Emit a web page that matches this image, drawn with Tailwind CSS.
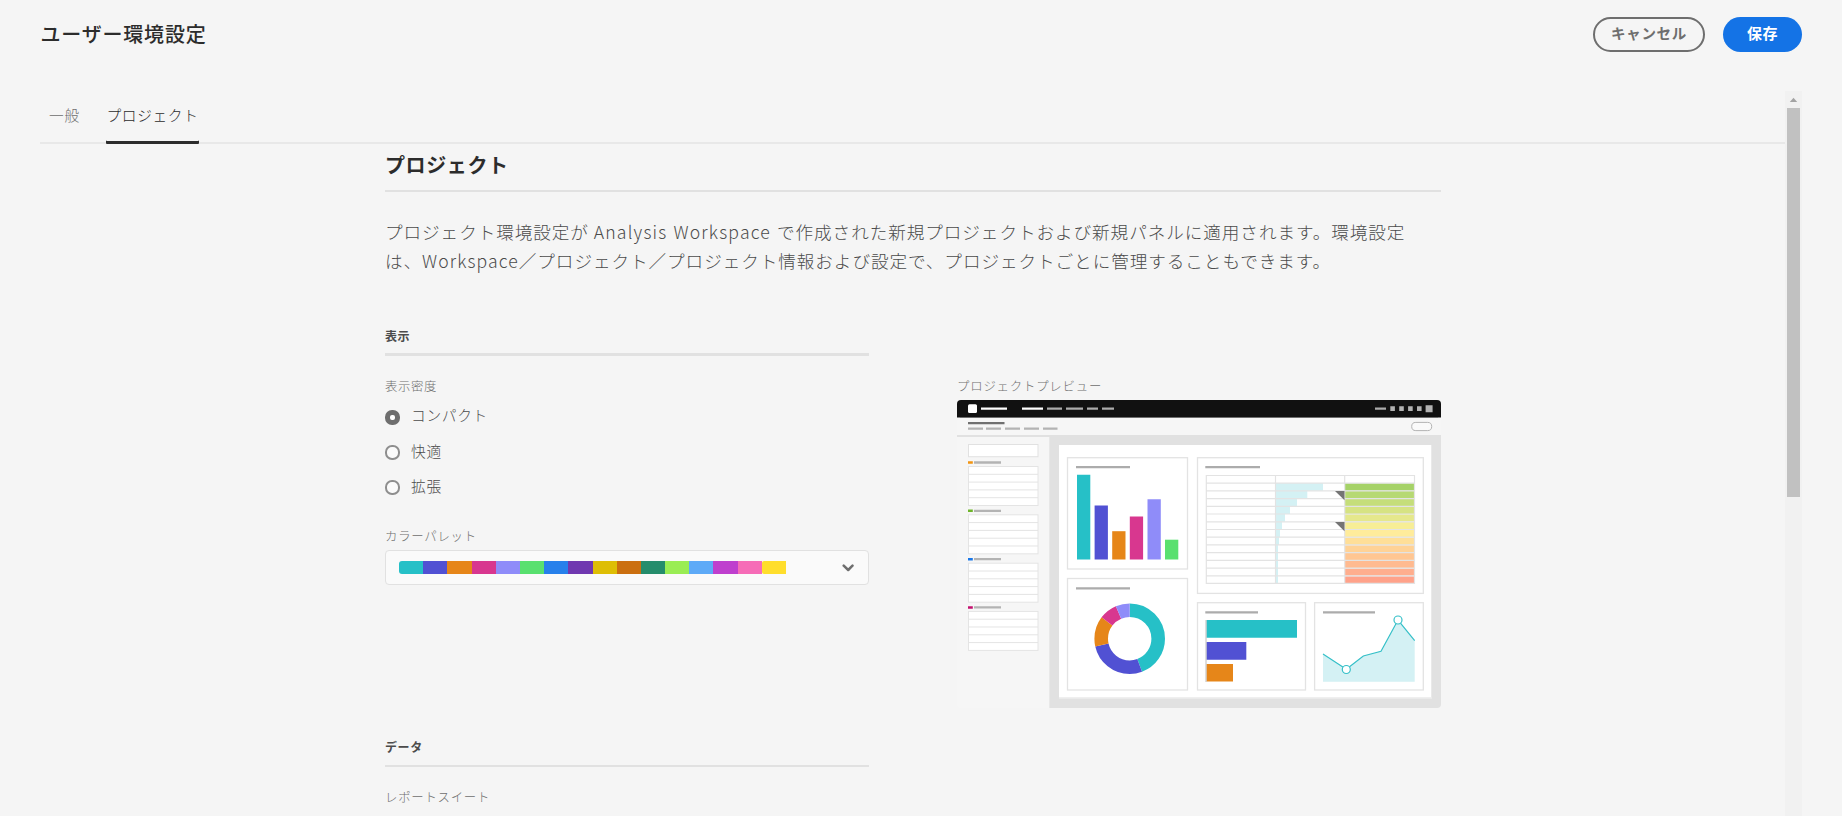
<!DOCTYPE html>
<html lang="ja">
<head>
<meta charset="utf-8">
<title>ユーザー環境設定</title>
<script src="https://cdn.jsdelivr.net/npm/@tailwindcss/browser@4"></script>
</head>
<body class="h-screen overflow-hidden bg-[#f5f5f5] font-['Noto_Sans_CJK_JP',sans-serif] font-light text-[#4b4b4b] whitespace-nowrap">
<div class="flex h-[816px] flex-col pr-10 pl-10">
  <header class="flex h-[91px] shrink-0 items-start justify-between pt-[17px]">
    <h1 class="h-[35px] pl-[0.5px] text-[20px] leading-[33px] font-medium tracking-[0.8px] text-[#2c2c2c]">ユーザー環境設定</h1>
    <div class="flex gap-[18px]">
      <button class="flex h-[35px] w-[112px] items-center justify-center rounded-full border-2 border-[#6e6e6e] pb-0.5 text-[14.5px] leading-none font-bold tracking-[0.7px] text-[#6e6e6e]">キャンセル</button>
      <button class="flex h-[35px] w-[79px] items-center justify-center rounded-full bg-[#1473e6] pb-[4px] text-[15px] leading-none font-bold tracking-[0.5px] text-white">保存</button>
    </div>
  </header>

  <div class="flex min-h-0 flex-1">
    <main class="flex min-w-0 flex-1 flex-col overflow-hidden">
      <nav class="flex h-[53px] shrink-0 gap-[26px] border-b-2 border-[#e8e8e8] pl-[9px] text-[14.7px] tracking-[0.75px]">
        <a class="h-[53px] w-[31px] leading-[47px] text-[#6e6e6e]">一般</a>
        <a class="h-[53px] w-[93px] rounded-[1px] pl-[0.5px] leading-[47px] tracking-[0.65px] text-[#2c2c2c] shadow-[inset_0_-3px_0_#2c2c2c]">プロジェクト</a>
      </nav>

      <div class="ml-[345px] flex w-[1056px] flex-col">
        <h2 class="h-[48px] shrink-0 border-b-2 border-[#e1e1e1] text-[20px] leading-[42px] font-bold tracking-[0.6px] text-[#2c2c2c]">プロジェクト</h2>
        <p class="h-[136px] shrink-0 pt-[25px] text-[17.6px] leading-[29px] tracking-[0.94px]">プロジェクト環境設定が <span class="tracking-[1.2px] [word-spacing:0.9px]">Analysis Workspace </span>で作成された新規プロジェクトおよび新規パネルに適用されます。環境設定<br>は、<span class="tracking-[1.1px]">Workspace</span>／プロジェクト／プロジェクト情報および設定で、プロジェクトごとに管理することもできます。</p>

        <div class="grid grid-cols-[484px_484px] justify-between">
          <section class="flex flex-col">
            <h3 class="h-[28px] border-b-3 border-[#e1e1e1] text-[12px] leading-[15px] font-bold tracking-[0.6px]">表示</h3>
            <div class="h-[54px] pt-[22px] text-[12.4px] leading-4 tracking-[0.6px] text-[#6e6e6e]">表示密度</div>
            <div class="flex h-[120px] flex-col gap-5 text-[14.7px] tracking-[0.7px]">
              <label class="flex h-[15px] items-center gap-[11px]"><span class="size-[15px] rounded-[7px] border-5 border-[#6e6e6e] bg-white"></span><span class="pb-[5px] leading-4">コンパクト</span></label>
              <label class="flex h-[15px] items-center gap-[11px]"><span class="size-[15px] rounded-[7px] border-2 border-[#8e8e8e] bg-[#fafafa]"></span><span class="pb-[4px] leading-4">快適</span></label>
              <label class="flex h-[15px] items-center gap-[11px]"><span class="size-[15px] rounded-[7px] border-2 border-[#8e8e8e] bg-[#fafafa]"></span><span class="pb-[4px] leading-4">拡張</span></label>
            </div>
            <div class="h-[20px] text-[12.4px] leading-3 tracking-[0.75px] text-[#6e6e6e]">カラーパレット</div>
            <div class="flex h-[35px] items-center justify-between rounded-[4px] border border-[#e1e1e1] bg-[#fafafa] pr-[14px] pl-[13px]">
              <div class="flex h-[13px] w-[387px] overflow-hidden rounded-l-[3px]">
                <i class="flex-1 bg-[#26c0c7]"></i><i class="flex-1 bg-[#5151d3]"></i><i class="flex-1 bg-[#e68619]"></i><i class="flex-1 bg-[#d8378f]"></i><i class="flex-1 bg-[#8f8cf9]"></i><i class="flex-1 bg-[#59e06f]"></i><i class="flex-1 bg-[#2780eb]"></i><i class="flex-1 bg-[#7038b0]"></i><i class="flex-1 bg-[#debe05]"></i><i class="flex-1 bg-[#cb6f10]"></i><i class="flex-1 bg-[#258d6c]"></i><i class="flex-1 bg-[#9aed54]"></i><i class="flex-1 bg-[#5eaaf7]"></i><i class="flex-1 bg-[#bf3fce]"></i><i class="flex-1 bg-[#f66cb7]"></i><i class="flex-1 rounded-l-[2px] bg-[#ffde2c]"></i>
              </div>
              <svg class="h-[8px] w-[12px]" viewBox="0 0 12 8" fill="none" stroke="#6e6e6e" stroke-width="2.5" stroke-linecap="round" stroke-linejoin="round"><path d="M1.700 1.700 6.200 6l4.300-4.300"/></svg>
            </div>
          </section>

          <section class="flex flex-col pt-[50px]">
            <div class="h-[22px] text-[12.4px] leading-4 tracking-[0.8px] text-[#6e6e6e]">プロジェクトプレビュー</div>
            <svg class="h-[308px] w-[484px] rounded-[4px]" viewBox="0 0 484 308">
              <rect width="484" height="308" fill="#f6f6f6"/>
              <rect width="484" height="17.5" fill="#111"/><path d="M3 17.5h478" stroke="#6e6e6e"/>
              <rect x="11" y="4.2" width="9" height="8.8" rx="1.5" fill="#fff"/>
              <g stroke-width="2.2"><path stroke="#fff" d="M24 8.6h26M65 8.6h21"/><path stroke="#acacac" d="M90 8.6h15M109 8.6h17M130 8.6h11M145 8.6h12M418 8.6h11"/></g>
              <path fill="#b3b3b3" d="M433.3 6.3h4.6v4.6h-4.6zM442.2 6.3h4.6v4.6h-4.6zM451.1 6.3h4.6v4.6h-4.6zM460 6.3h4.6v4.6H460zM468.6 5.2h7v7h-7z"/>
              <path d="M11 23.2h36.5" stroke="#707070" stroke-width="2.2"/>
              <path d="M11 28.6h15M29 28.6h15M48 28.6h15M67 28.6h15M86 28.6h14.5" stroke="#b3b3b3" stroke-width="2.4"/>
              <rect x="454.7" y="22.4" width="20" height="8.2" rx="4.1" fill="#fafafa" stroke="#b3b3b3"/>
              <path fill="#e1e1e1" d="M0 35h484v273H92.300V37H0z"/>
              <rect x="102" y="45" width="373" height="253.300" fill="#fff"/>
              <path d="M474.500 45v252.800H102" fill="none" stroke="#e9e9e9"/>
              <rect x="11.500" y="44.500" width="69.500" height="12.200" fill="#fff" stroke="#e1e1e1"/>
              <g id="rail">
                <g fill="#fff" stroke="#e4e4e4"><rect x="11.500" y="66.500" width="69.500" height="39"/><path d="M11.500 74.300H81M11.500 82.100H81M11.500 89.900H81M11.500 97.700H81"/></g>
                <path d="M17 62.500h27" stroke="#b3b3b3" stroke-width="2.300"/>
              </g>
              <use href="#rail" y="48.300"/><use href="#rail" y="96.700"/><use href="#rail" y="144.900"/>
              <g stroke-width="2.400"><path stroke="#f29411" d="M11 62.500h4.800"/><path stroke="#6fb52b" d="M11 110.800h4.800"/><path stroke="#1b78e8" d="M11 159.300h4.800"/><path stroke="#c3116f" d="M11 207.500h4.800"/></g>
              <g fill="#fff" stroke="#e3e3e3" stroke-width="1.300"><rect x="110.500" y="57.700" width="120" height="111.300"/><rect x="110.500" y="178.500" width="120" height="111.500"/><rect x="240.500" y="57.700" width="225.800" height="135.700"/><rect x="240.500" y="202.700" width="108" height="87.300"/><rect x="357.600" y="202.700" width="108.700" height="87.300"/></g>
              <path d="M119 67.200h54M119 188.300h54M248.300 67.200H303M248.300 212.300H301M366 212.300h52" stroke="#acacac" stroke-width="2.200"/>
              <path fill="#26c0c7" d="M120 74.800h13.300v84.700H120z"/><path fill="#5151d3" d="M137.600 105.500h13.300v54h-13.300z"/><path fill="#e68619" d="M155.200 131.200h13.300v28.300h-13.300z"/><path fill="#d8378f" d="M172.800 116.500h13.300v43h-13.300z"/><path fill="#8f8cf9" d="M190.500 99.200h13.300v60.300h-13.300z"/><path fill="#59e06f" d="M208 139.700h13.300v19.800H208z"/>
              <g transform="rotate(-90 172.700 238.700)" fill="none" stroke-width="13.600">
                <circle cx="172.700" cy="238.700" r="28.500" pathLength="360" stroke="#26c0c7" stroke-dasharray="159.500 360"/>
                <circle cx="172.700" cy="238.700" r="28.500" pathLength="360" stroke="#5151d3" stroke-dasharray="97.800 360" stroke-dashoffset="-159.500"/>
                <circle cx="172.700" cy="238.700" r="28.500" pathLength="360" stroke="#e68619" stroke-dasharray="49.900 360" stroke-dashoffset="-257.300"/>
                <circle cx="172.700" cy="238.700" r="28.500" pathLength="360" stroke="#d8378f" stroke-dasharray="29.700 360" stroke-dashoffset="-307.200"/>
                <circle cx="172.700" cy="238.700" r="28.500" pathLength="360" stroke="#8f8cf9" stroke-dasharray="23.100 360" stroke-dashoffset="-336.900"/>
              </g>
              <path fill="#d4f1f4" d="M318.500 83H366v7.700h-15.700v7.800H340v7.700h-7v7.800h-5v7.700h-3v7.800h-2v7.700h-1v7.800h-1v38h-2.500z"/>
              <g>
                <path fill="#a5d267" d="M388 83.300h69v7.400h-69z"/><path fill="#b6d973" d="M388 91h69v7.400h-69z"/><path fill="#c5de7a" d="M388 98.800h69v7.400h-69z"/><path fill="#d6e383" d="M388 106.500h69v7.400h-69z"/><path fill="#e5e88c" d="M388 114.200h69v7.400h-69z"/><path fill="#f7ee96" d="M388 122h69v7.400h-69z"/><path fill="#ffec9b" d="M388 129.700h69v7.400h-69z"/><path fill="#ffdf98" d="M388 137.500h69v7.400h-69z"/><path fill="#ffd296" d="M388 145.200h69v7.400h-69z"/><path fill="#ffc692" d="M388 152.900h69v7.400h-69z"/><path fill="#ffba90" d="M388 160.700h69v7.400h-69z"/><path fill="#ffae8e" d="M388 168.400h69v7.400h-69z"/><path fill="#ffa28a" d="M388 176.200h69v7.400h-69z"/>
              </g>
              <path fill="none" stroke="#e3e3e3" stroke-width="1.200" d="M249.300 75.500h208.200v107.800H249.300zM318.500 75.500v107.800M387.700 75.500v107.800M249 83.100h208.500M249 90.800h208.500M249 98.600h208.500M249 106.300h208.500M249 114h208.500M249 121.800h208.500M249 129.500h208.500M249 137.200h208.500M249 144.900h208.500M249 152.700h208.500M249 160.400h208.500M249 168.100h208.500M249 175.800h208.500"/>
              <path fill="#747474" d="M378 91h9.500v9.300zM378 122h9.500v9.300z"/>
              <path fill="#26c0c7" d="M249.500 220H340v17.700h-90.500z"/><path fill="#5151d3" d="M249.500 242h39.800v17.700h-39.800z"/><path fill="#e68619" d="M249.500 264H276v17.500h-26.500z"/><path d="M249 220v62" stroke="#bcbcbc"/>
              <path fill="#d4f1f4" d="M366 254l23.300 15.300 17-13.300 17.700-4.700L441 220l16.700 20.700v41H366z"/>
              <path fill="none" stroke="#36c0c8" stroke-width="1.200" d="M366 254l23.300 15.300 17-13.300 17.700-4.700L441 220l16.700 20.700"/>
              <g fill="#fff" stroke="#36c0c8" stroke-width="1.200"><circle cx="389.300" cy="269.500" r="4"/><circle cx="441" cy="220" r="4"/></g>
            </svg>
          </section>
        </div>

        <section class="mt-[32px] flex w-[484px] flex-col">
          <h3 class="h-[27px] border-b-2 border-[#e1e1e1] text-[12px] leading-[14px] font-bold tracking-[0.6px]">データ</h3>
          <div class="pt-[22px] text-[12.4px] leading-4 tracking-[0.75px] text-[#6e6e6e]">レポートスイート</div>
        </section>
      </div>
    </main>

    <div class="flex w-[17px] shrink-0 flex-col items-center bg-[#f1f1f1]">
      <svg class="h-[17px] w-[17px] shrink-0" viewBox="0 0 17 17"><path fill="#a3a3a3" d="M4.800 11l3.700-4.200 3.700 4.200z"/></svg>
      <div class="h-[389px] w-[13px] bg-[#c1c1c1]"></div>
    </div>
  </div>
</div>
</body>
</html>
